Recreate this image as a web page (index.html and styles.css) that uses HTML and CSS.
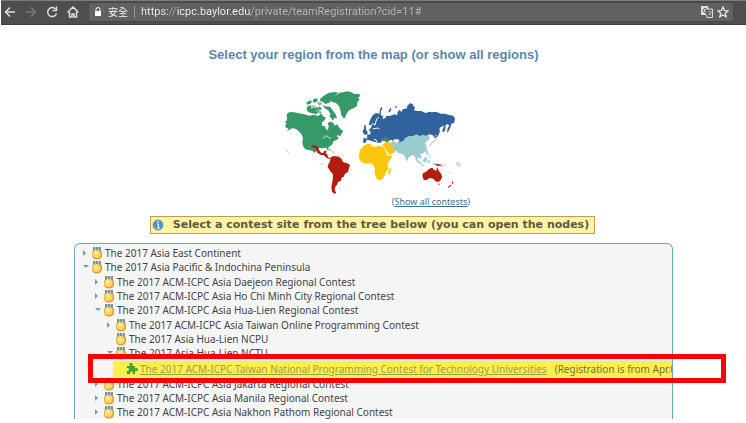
FILE: index.html
```html
<!DOCTYPE html>
<html lang="en">
<head>
<meta charset="utf-8">
<title>Team Registration</title>
<link rel="stylesheet" href="styles.css">
</head>
<body>
<svg class="defs" aria-hidden="true">
  <symbol id="medal" viewBox="0 0 12 14">
    <path d="M2 1h8v4H2z" fill="#75949c"/><path d="M4 1h1v4H4zM7 1h1v4H7z" fill="#b4c6c6"/>
    <path d="M1 5.500Q6 3 11 5.500V9Q11 13.500 6 13.500T1 9z" fill="#dfa238"/>
    <circle cx="5.500" cy="8" r="4" fill="#f9d66b"/><circle cx="5" cy="7" r="2" fill="#fde695"/>
  </symbol>
</svg>
<header class="toolbar">
  <button class="tool" aria-label="Back"><svg viewBox="0 0 12 12"><path d="M11 6H2M6 1.500L1.500 6 6 10.500"/></svg></button>
  <button class="tool faded" aria-label="Forward" disabled><svg viewBox="0 0 12 12"><path d="M1 6h9M6 1.500L10.500 6 6 10.500"/></svg></button>
  <button class="tool" aria-label="Reload"><svg viewBox="0 0 12 12"><path d="M9.500 3A4.500 4.500 0 1 0 10.500 7.500M10.500 .5V4.500H6.500"/></svg></button>
  <button class="tool" aria-label="Home"><svg viewBox="0 0 12 12"><path d="M.5 6.500L6 1l5.500 5.500M2.500 6v5h2.500V8h2v3h2.500V6"/></svg></button>
  <div class="address">
    <svg class="lock" viewBox="0 0 8 10"><path d="M1 4h6v5H1z" fill="#fff"/><path d="M2 4V2.500a2 2 0 0 1 4 0V4" fill="none" stroke="#fff"/></svg>
    <span class="secure">安全</span><span class="divider"></span>
    <input class="url" aria-label="Address" value="https://icpc.baylor.edu/private/teamRegistration?cid=11#">
    <button class="mini" aria-label="Translate"><svg viewBox="0 0 12 12"><path d="M0 0h7l2 9H0z" fill="#ddd"/><path d="M5 3h6.500v8.500H6L5 9" fill="#666" stroke="#ddd"/><path d="M7 6h4M9 5v1M10 6L8 9M8 7l2 2" fill="none" stroke="#aaa"/><path d="M5.500 3A2 2 0 1 0 5.500 6V4.500H4" fill="none" stroke="#555"/></svg></button>
    <button class="mini" aria-label="Bookmark"><svg viewBox="0 0 12 12"><path d="M6 1l1.500 3.500 3.500.3-2.700 2.400.9 3.600L6 9l-3.200 1.800.9-3.600L1 4.800l3.500-.3z" fill="none" stroke="#eee" stroke-width="1.200"/></svg></button>
  </div>
</header>
<main class="page">
  <h1 class="title">Select your region from the map (or show all regions)</h1>
  <figure class="map">
    <svg viewBox="0 0 570 330" role="img" aria-label="World regions">
      <g fill="#359a68">
        <path d="M20 88l8-7 14 1 24 4 22 6 13-3 14 4 9-8 5 9 8 3-3 9-8 6 0 10 9 2 4 10 5 0 2-10-3-10 8-4 9 3 3 9 8-4 10 14 8 5-2 8-13 4-4 5 7 4-8 8-8 2-5 11-10 7-2 13-5-11-13 2-10-1-7 7-4 8-9-7-20-4-6-8-3-12 2-14-5-12-8-8-9-8-11-1-10 6-6 2 6-8-8-2-3-7 5-5-5-6 6-4z"/>
        <path d="M158 33l14-4 6-6 13-1 9-3 15 3 7 5 16 0 3 6-6 4 3 7-6 8-1 11-10 7-13 5-7 9-6 14-4 2-7-9-3-16-4-12-9-9-12-3-6-6z"/>
        <path d="M120 42l11-10 16-9 21-2 7 4-12 8-9 8-5 12-13 4-8-7-9 0zM126 61l11 3 13 1 10 13 7 10 4 12-8-2-4 9-6-8-5-5 4-6-8-13-8-4zM80 67l9-6 15 1 9 6 5 12-9 7-17-3-10-5zM80 52l11-6 7 4-8 7-10 2zM100 43l10-3 4 7-9 7-6-4zM117 64l8 5-5 9 5 5-7 2-6-12zM110 54l11-2 5 5-9 3zM171 145l8-7 5 13-7 3z"/>
      </g>
      <path d="M93 61l6 4 4-4 4 7-7-1-6 3zM108 80l8-7 3 5-6 9M119 45l5 7-7 4M129 63l5 8-4 7M92 50l8 7 8-4 9 6M134 153l9 1 3 5 7 1M127 159l8-3" fill="none" stroke="#fff" stroke-width="2"/>
      <g fill="#b51c10">
        <path d="M94 180l11 1 10 5 2 8 6 9 7 0 3-6 7 1-3 8 5 2 2 8 7 5-2 2-10-5-7-7-11-2-9-6-6-12-9-6zM152 216l10-3 15 2 8 7 4 9 16 5 5 4-3 9-3 12-9 5-4 9-7 5-1 7-9 4-3 8-5 6-2 10 5 9-6 2-7-6-2-14 4-20 1-18-8-9-8-13 2-8 5-9z"/>
        <path d="M144 192l9 3 3 2-8-1zM157 200l6 0-2 3zM429 265l9-5 12-10 8-1 4 6 7 2 3-11 5 13 7 8 2 10-4 9-7 5-9-2-6-8-11-2-9 6-9 0-4-13zM474 296h6l-3 5zM516 288l5 5-5 5zM514 298l-1 4-8 7-1-4zM460 234l7 3 12 1 10 7-9-3-8 1-8-5z"/>
      </g>
      <g fill="#30639d" transform="matrix(.872 0 0 1 33 0)">
        <path d="M258 163l4-2 0-12 12-1-1-9-6-3 10-10-1-7-9 2 5-16 9-14 11-7 12 2 14 9-3 8 9-3 4-7 15-1 13-4 10 2 0-8 8-8 5 7 6-8 14-3 1-8 11-8 10 5-1 5 7 2-4 10 12 2 13 0 15 6 13-4 8 2 14-2 18 6 14 0 14 4 14 2 6 8-2 13-10 3-3 10-7 13-5 5 1-13 7-10-7-3-14 5-13 5 1 13-8 15-10 3-6-8-11-3-15 6-13-3-9 10-13 4-6 13-11 6-9-2-13 4-11-7-7-2-2-7 7-2-7-5-12 0-5 5-6-4-10 4-4 6-9-9-8 0-5 8-12 0z"/>
        <path d="M246 137l5-4 1-12 5-1 1 14 6 8-2 7-11 1zM249 160h12l-1 9-7 6-5-3zM304 89l2-17 6-6 3 4-6 8 1 10zM335 80l6-11 5 3-6 10zM357 65l6-3 2 5-6 1z"/>
        <path d="M520 139l7-18 5-2-1 16-7 7z"/>
      </g>
      <path d="M253 149l8 4M272 122l6-6 7 4 5-18 7-5M278 132l15-3 5 3M282 163l6 1 3 8" fill="none" stroke="#fff" stroke-width="3"/>
      <path d="M303 162l8-5 15 1 1 10-12 1-12-2z" fill="#4c8272"/>
      <g fill="#fbc70d">
        <path d="M240 195l10-12 11-6 12-1 1 7 12 2 9-3 17 4 4 11 7 15 14 0-4 10-9 10-1 13 3 7-8 9-3 10-8 12-13 3-6-10-5-14 2-10-5-11-7-6-13 1-11-1-9-9-4-9z"/>
        <path d="M307 180l11-9 9 0 8 6 7 12 7 2-4 9-14 10-5-2-9-15zM326 256l8-9-1 9-4 13-4-2z"/>
      </g>
      <path transform="matrix(.88 0 0 .85 42 28)" d="M330 167l11-2 8 6 13-3 13-5 3-9 15-7 13 0 11-6 13 7 10-5 12 5 4-6 7 8-2 10-10 6-4 8 4 8 2 10-5 11-12 7-6 4 6 9-4 4-8-5-4 7 9 12-6 1-8-16-6-10-10 0-10 10-2 10-6-6-5-14-9-6-14-4-5-8-8-3-4-8z" fill="#98ccce"/>
      <path d="M404 219l16 12 9 8-8-1-14-12zM420 239l11 2 8 3-11-1zM428 226l9-11 5 4-4 13-7 0zM442 227l6-3 1 11-4 1zM438 196l5-1 0 9 5 5-4 2-6-7zM449 210l5 6-5 3zM458 234l8 5-7 0z" fill="#98ccce"/>
      <path d="M462 158l6-8 4 4-4 8-7 7-8 6-3 8" fill="none" stroke="#b8b0b8" stroke-width="3"/>
      <path d="M18 193l6 8 4 3M176 312l5 2M120 237l8 2M480 237l13 2 7 2M505 261l8 5M529 233l10 0 1 10-7 0zM531 238h8" fill="none" stroke="#bbb0b8" stroke-width="2"/>
    </svg>
    <figcaption class="all">(<a href="#">Show all contests</a>)</figcaption>
  </figure>
  <h2 class="hint">
    <svg viewBox="0 0 12 12"><circle cx="6" cy="6" r="5" fill="#4d91c8" stroke="#7896aa"/><path d="M5 3h2M5 5h1.500v4M4.500 9h3.500" stroke="#fff" fill="none"/></svg>
    <span>Select a contest site from the tree below (you can open the nodes)</span>
  </h2>
  <section class="panel">
    <ul class="tree">
      <li><div class="row closed"><svg class="medal"><use href="#medal"/></svg>The 2017 Asia East Continent</div></li>
      <li><div class="row open"><svg class="medal"><use href="#medal"/></svg>The 2017 Asia Pacific &amp; Indochina Peninsula</div>
        <ul>
          <li><div class="row closed"><svg class="medal"><use href="#medal"/></svg>The 2017 ACM-ICPC Asia Daejeon Regional Contest</div></li>
          <li><div class="row closed"><svg class="medal"><use href="#medal"/></svg>The 2017 ACM-ICPC Asia Ho Chi Minh City Regional Contest</div></li>
          <li><div class="row open"><svg class="medal"><use href="#medal"/></svg>The 2017 ACM-ICPC Asia Hua-Lien Regional Contest</div>
            <ul>
              <li><div class="row closed"><svg class="medal"><use href="#medal"/></svg>The 2017 ACM-ICPC Asia Taiwan Online Programming Contest</div></li>
              <li><div class="row"><svg class="medal"><use href="#medal"/></svg>The 2017 Asia Hua-Lien NCPU</div></li>
              <li><div class="row open"><svg class="medal"><use href="#medal"/></svg>The 2017 Asia Hua-Lien NCTU</div>
                <ul>
                  <li class="chosen"><div class="site"><svg class="piece" viewBox="0 0 12 12"><path d="M1 3h3Q2.500 0 5 0T6.500 3H9v2.500q3-1.500 3 1T9 8v3H6.500q1-2.500-1-2.500T4.500 11H1V8q2 .5 2-1.500T1 5z" fill="#45a02c"/></svg><a href="#">The 2017 ACM-ICPC Taiwan National Programming Contest for Technology Universities</a><span class="note">(Registration is from Apr.0</span></div></li>
                </ul>
              </li>
            </ul>
          </li>
          <li><div class="row closed"><svg class="medal"><use href="#medal"/></svg>The 2017 ACM-ICPC Asia Jakarta Regional Contest</div></li>
          <li><div class="row closed"><svg class="medal"><use href="#medal"/></svg>The 2017 ACM-ICPC Asia Manila Regional Contest</div></li>
          <li><div class="row closed"><svg class="medal"><use href="#medal"/></svg>The 2017 ACM-ICPC Asia Nakhon Pathom Regional Contest</div></li>
        </ul>
      </li>
    </ul>
  </section>
</main>
</body>
</html>
```
FILE: styles.css
```css
* { box-sizing: border-box; }
body { margin: 0; background: #fff; font-family: "Noto Sans", sans-serif; font-size: 10px; color: #444; }
button { border: 0; padding: 0; background: none; }
ul { list-style: none; margin: 0; padding: 0; }
.defs { display: none; }

.toolbar { display: flex; align-items: center; height: 25px; margin-left: 1px; padding: 0 12px 2px 2px; gap: 7px; background: #4e4e4e; border-top: 1px solid #7b7b7b; border-bottom: 1px solid #3c3c3c; }
.tool { width: 14px; height: 14px; display: flex; }
.tool svg { width: 12px; height: 12px; margin: 1px; fill: none; stroke: #dedede; stroke-width: 1.5; }
.faded { opacity: .3; }
.address { flex: 1; display: flex; align-items: center; height: 20px; margin-left: 1px; padding: 0 4px 0 5px; background: #616161; border: 1px solid #484848; border-radius: 2px; }
.lock { width: 8px; height: 10px; }
.secure { margin-left: 6px; font: 10px "Noto Sans CJK TC", sans-serif; color: #eee; }
.divider { width: 1px; height: 12px; margin: 0 6px; background: #999; }
.url { flex: 1; min-width: 0; height: 18px; border: 0; padding: 0; outline: 0; font: 11px Roboto, sans-serif; color: transparent; background: linear-gradient(90deg, #eee 27px, #aaa 27px 36px, #f4f4f4 36px 110px, #b8b8b8 110px); -webkit-background-clip: text; background-clip: text; }
.mini { width: 12px; height: 12px; margin-left: 4px; display: flex; }
.mini svg { width: 12px; height: 12px; }

.page { padding: 0 73px 0 74px; display: flex; flex-direction: column; align-items: center; }
.title { margin: 22px 0 0; font: bold 13px/16px "Liberation Sans", sans-serif; color: #5a86ac; }
.map { margin: 22px 0 0 3px; width: 190px; }
.map svg { display: block; width: 190px; height: 110px; }
.all { height: 14px; font: 9px/14px "Noto Sans", sans-serif; text-align: right; color: #3e718c; }
.all a { color: #3e718c; }
.hint { display: flex; align-items: center; gap: 9px; height: 18px; margin: 7px 2px 0 0; padding: 0 5px 0 1px; background: #fdf4a6; border: 1px solid #c39a54; font: bold 11px/16px "DejaVu Sans", sans-serif; color: #5d5843; }
.hint svg { width: 12px; height: 12px; }

.panel { align-self: stretch; height: 176px; margin-top: 9px; padding: 2px 0 0 6px; background: #f5f5f5; border: 1px solid #64aabb; border-bottom: 0; border-radius: 6px 6px 0 0; }
.tree ul { padding: 1px 0 0 12px; }
.row { display: flex; align-items: center; height: 14px; line-height: 14px; padding-left: 10px; white-space: nowrap; position: relative; }
.row::before { content: ""; position: absolute; left: 2px; top: 4px; border: 3px solid transparent; }
.closed::before { border-left-color: #6aa0b4; }
.open::before { border-top-color: #6aa0b4; top: 5px; }
.medal { flex: none; width: 12px; height: 14px; margin-right: 2px; }
.chosen { position: relative; height: 16px; margin-left: -4px; }
.site { display: flex; align-items: center; height: 16px; padding-left: 13px; overflow: hidden; white-space: nowrap; background: #fbee4f; }
.site a { color: #9aa04e; }
.piece { flex: none; width: 12px; height: 12px; margin-right: 2px; }
.note { margin-left: 8px; color: #77703a; }
.chosen::after { content: ""; position: absolute; inset: -7px -54px -6px -25px; border: 5px solid #f80202; z-index: 1; }
```
